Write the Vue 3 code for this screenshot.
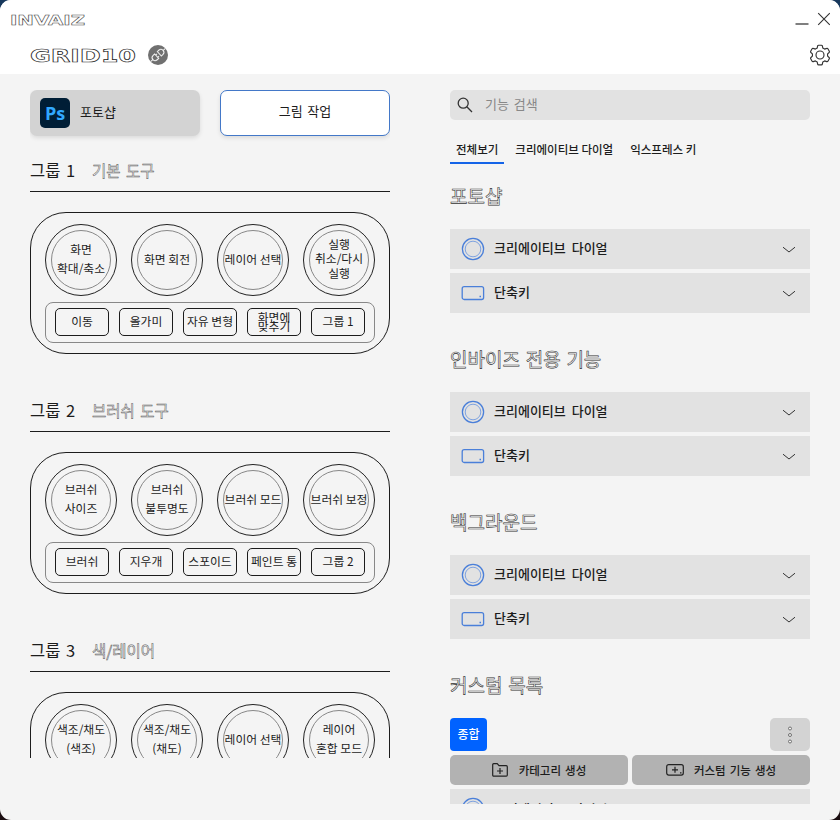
<script setup>
const groups = [
  {
    name: '그룹 1',
    title: '기본 도구',
    dials: [['화면', '확대/축소'], ['화면 회전'], ['레이어 선택'], ['실행', '취소/다시', '실행']],
    keys: [['이동'], ['올가미'], ['자유 변형'], ['화면에', '맞추기'], ['그룹 1']],
  },
  {
    name: '그룹 2',
    title: '브러쉬 도구',
    dials: [['브러쉬', '사이즈'], ['브러쉬', '불투명도'], ['브러쉬 모드'], ['브러쉬 보정']],
    keys: [['브러쉬'], ['지우개'], ['스포이드'], ['페인트 통'], ['그룹 2']],
  },
  {
    name: '그룹 3',
    title: '색/레이어',
    dials: [['색조/채도', '(색조)'], ['색조/채도', '(채도)'], ['레이어 선택'], ['레이어', '혼합 모드']],
    keys: [],
  },
]

const sections = ['포토샵', '인바이즈 전용 기능', '백그라운드']
const rows = [
  { kind: 'dial', label: '크리에이티브 다이얼' },
  { kind: 'key', label: '단축키' },
]
const tabs = ['전체보기', '크리에이티브 다이얼', '익스프레스 키']
</script>

<template>
  <div class="window">
    <header class="header">
      <div class="titlebar">
        <svg class="brand" width="80" height="16" viewBox="0 0 80 16">
          <text x="0" y="13" textLength="75" lengthAdjust="spacingAndGlyphs">INVAIZ</text>
        </svg>
        <div class="controls">
          <svg width="14" height="14" viewBox="0 0 14 14"><path d="M.5 12H13.5" stroke="#555" stroke-width="1.5" /></svg>
          <svg width="14" height="14" viewBox="0 0 14 14"><path d="M1.2 1.2 12.8 12.8M12.8 1.2 1.2 12.8" stroke="#333" stroke-width="1.1" /></svg>
        </div>
      </div>
      <div class="device">
        <svg class="product" width="108" height="20" viewBox="0 0 108 20">
          <text x="0" y="17" textLength="106" lengthAdjust="spacingAndGlyphs">GRID10</text>
        </svg>
        <svg class="link" width="20" height="20" viewBox="0 0 20 20" fill="none">
          <circle cx="10" cy="10" r="10" fill="#707070" />
          <g transform="rotate(-42 10 10)" stroke="#eee" stroke-width="1.1">
            <path d="M0 10H2.6M8.2 7H6.2A3 3 0 0 0 6.2 13H8.2ZM8.2 8.5H10M8.2 11.5H10M11.8 7H13.8A3 3 0 0 1 13.8 13H11.8ZM17.4 10H20" />
          </g>
        </svg>
        <svg class="gear" width="22" height="22" viewBox="0 0 22 22" fill="none" stroke="#333" stroke-width="1.15" stroke-linejoin="round">
          <path d="M9.6 1.2H12.4Q13.2 1.2 13.4 2L13.8 4.1L15.6 5.1L17.7 4.4Q18.5 4.1 18.9 4.8L20.3 7.2Q20.7 7.9 20.1 8.5L18.6 9.9V12.1L20.1 13.5Q20.7 14.1 20.3 14.8L18.9 17.2Q18.5 17.9 17.7 17.6L15.6 16.9L13.8 17.9L13.4 20Q13.2 20.8 12.4 20.8H9.6Q8.8 20.8 8.6 20L8.2 17.9L6.4 16.9L4.3 17.6Q3.5 17.9 3.1 17.2L1.7 14.8Q1.3 14.1 1.9 13.5L3.4 12.1V9.9L1.9 8.5Q1.3 7.9 1.7 7.2L3.1 4.8Q3.5 4.1 4.3 4.4L6.4 5.1L8.2 4.1L8.6 2Q8.8 1.2 9.6 1.2Z" />
          <circle cx="11" cy="11" r="4" />
        </svg>
      </div>
    </header>

    <main class="body">
      <section class="left">
        <div class="modes">
          <button class="mode app">
            <span class="ps">Ps</span>
            <span>포토샵</span>
          </button>
          <button class="mode task">그림 작업</button>
        </div>
        <article v-for="g in groups" :key="g.name" class="group">
          <h3 class="group-head"><span class="num">{{ g.name }}</span><span class="name">{{ g.title }}</span></h3>
          <div class="pad">
            <div class="dials">
              <div v-for="(d, i) in g.dials" :key="i" class="dial">
                <div class="inner" :class="{ triple: d.length === 3 }">
                  <span v-for="(line, j) in d" :key="j">{{ line }}</span>
                </div>
              </div>
            </div>
            <div class="keys">
              <div v-for="(k, i) in g.keys" :key="i" class="key">
                <span v-for="line in k" :key="line">{{ line }}</span>
              </div>
            </div>
          </div>
        </article>
      </section>

      <section class="right">
        <div class="search">
          <svg width="16" height="16" viewBox="0 0 16 16" fill="none" stroke="#333" stroke-width="1.3"><circle cx="6.2" cy="6.2" r="5" /><path d="M9.8 9.8 15 15" /></svg>
          <span>기능 검색</span>
        </div>
        <nav class="tabs">
          <span v-for="(t, i) in tabs" :key="t" class="tab" :class="{ active: i === 0 }">{{ t }}</span>
        </nav>
        <div v-for="s in sections" :key="s" class="section">
          <h2>{{ s }}</h2>
          <div v-for="r in rows" :key="r.kind" class="row">
            <svg v-if="r.kind === 'dial'" width="24" height="24" viewBox="0 0 24 24" fill="none" stroke="#4a7fd9"><circle cx="12" cy="12" r="10.6" stroke-width="1.3" /><circle cx="12" cy="12" r="7.8" stroke="#7fa3e0" /></svg>
            <svg v-else width="24" height="24" viewBox="0 0 24 24" fill="none" stroke="#4a7fd9" stroke-width="1.3"><rect x="1.2" y="5.7" width="21.4" height="12.8" rx="2" /><path d="M18.5 15.5H20" /></svg>
            <span class="label">{{ r.label }}</span>
            <svg class="chevron" width="14" height="8" viewBox="0 0 14 8" fill="none" stroke="#333"><path d="M1 1.2 7 6 13 1.2" /></svg>
          </div>
        </div>
        <div class="section custom">
          <h2>커스텀 목록</h2>
          <div class="toolbar">
            <span class="badge">종합</span>
            <button class="more">
              <svg width="6" height="18" viewBox="0 0 6 18" fill="#f4f4f4" stroke="#555" stroke-width=".8"><circle cx="3" cy="2.5" r="1.5" /><circle cx="3" cy="9" r="1.5" /><circle cx="3" cy="15.5" r="1.5" /></svg>
            </button>
          </div>
          <div class="actions">
            <button>
              <svg width="16" height="14" viewBox="0 0 16 14" fill="none" stroke="#222" stroke-width="1.2"><path d="M.7 12V1.7Q.7.7 1.7.7H5.2L7 2.7H14.3Q15.3 2.7 15.3 3.7V12Q15.3 13.2 14.3 13.2H1.7Q.7 13.2.7 12ZM8 5V11M5 8H11" /></svg>
              <span>카테고리 생성</span>
            </button>
            <button class="fn">
              <svg width="18" height="12" viewBox="0 0 18 12" fill="none" stroke="#222" stroke-width="1.2"><rect x=".7" y=".7" width="16.6" height="10.4" rx="2" /><path d="M9 2.8V8.8M6 5.8H12M14 8.8H15.5" /></svg>
              <span>커스텀 기능 생성</span>
            </button>
          </div>
          <div class="row last">
            <svg width="24" height="24" viewBox="0 0 24 24" fill="none" stroke="#4a7fd9"><circle cx="12" cy="12" r="10.6" stroke-width="1.3" /><circle cx="12" cy="12" r="7.8" stroke="#7fa3e0" /></svg>
            <span class="label">크리에이티브 다이얼</span>
          </div>
        </div>
      </section>
    </main>
  </div>
</template>

<style>
body {
  background: linear-gradient(#17385c 50%, #1a0d10 50%);
}
</style>

<style scoped>
* { box-sizing: border-box; }
.window {
  width: 840px;
  height: 820px;
  border-radius: 11px;
  overflow: hidden;
  background: #f4f4f4;
  color: #1c1c1c;
  font-family: "Noto Sans CJK KR", sans-serif;
  display: flex;
  flex-direction: column;
}
svg { display: block; flex: none; }
button { border: 0; font-family: inherit; color: inherit; padding: 0; margin: 0; }
.header { height: 74px; flex: none; background: #fff; }
.titlebar { display: flex; justify-content: space-between; align-items: center; height: 38px; padding: 2px 9px 0 10px; }
.controls { display: flex; gap: 8px; padding-bottom: 3px; }
.brand text { font: 700 14px "DejaVu Sans", sans-serif; fill: #fff; stroke: #444; stroke-width: .5; }
.device { display: flex; align-items: center; padding: 6px 9px 0 30px; }
.product text { font: 700 18.5px "DejaVu Sans", sans-serif; fill: #fff; stroke: #222; stroke-width: .65; }
.link { margin-left: 10px; }
.gear { margin-left: auto; }
.body { flex: 1; min-height: 0; display: flex; gap: 60px; padding: 16px 30px; }
.left { width: 360px; height: 668px; overflow: hidden; }
.modes { display: flex; gap: 20px; height: 50px; }
.mode { width: 170px; height: 46px; border-radius: 7px; display: flex; align-items: center; font-size: 13px; line-height: 20px; word-spacing: 1.5px; box-shadow: 0 2px 4px rgba(0, 0, 0, .1); }
.mode.app { background: #d3d3d3; padding-left: 10px; gap: 10px; }
.mode.app span:last-child { padding-bottom: 3px; }
.mode.task { background: #fff; border: 1px solid #4378c8; justify-content: center; padding-bottom: 4px; }
.ps { width: 30px; height: 30px; border-radius: 5px; background: #001e36; color: #31a8ff; font: 700 18px/30px "Open Sans", sans-serif; text-align: center; }
.group { height: 240px; }
.group-head { margin: 0; height: 52px; padding-top: 17px; border-bottom: 1px solid #1c1c1c; display: flex; font-size: 16.5px; line-height: 26px; font-weight: 400; word-spacing: 2px; }
.num { width: 62px; }
.name { color: #fafafa; font-size: 15.5px; font-weight: 400; -webkit-text-stroke: .5px #555; }
.pad { margin-top: 20px; height: 142px; border: 1px solid #1c1c1c; border-radius: 36px; padding: 11px 14px; }
.dials { display: flex; justify-content: space-between; }
.dial { width: 72px; height: 72px; border: 1.4px solid #222; border-radius: 50%; display: flex; align-items: center; justify-content: center; }
.inner { width: 60px; height: 60px; border: 1px solid #888; border-radius: 50%; display: flex; flex-direction: column; align-items: center; justify-content: center; font-size: 11.8px; line-height: 19px; white-space: nowrap; padding-bottom: 4px; }
.inner.triple { line-height: 14.5px; padding-bottom: 3px; }
.keys { margin-top: 6px; height: 41px; border: 1px solid #888; border-radius: 8px; display: flex; justify-content: space-between; align-items: center; padding: 0 9px 2px; }
.key { width: 54px; height: 28px; border: 1px solid #1c1c1c; border-radius: 5px; display: flex; flex-direction: column; align-items: center; justify-content: center; font-size: 11.8px; line-height: 9px; white-space: nowrap; padding-bottom: 2px; }
.right { width: 360px; height: 714px; overflow: hidden; }
.search { height: 30px; border-radius: 5px; background: #e2e2e2; display: flex; align-items: center; gap: 12px; padding-left: 7px; font-size: 13px; word-spacing: 2px; color: #888; }
.search span { line-height: 20px; padding-bottom: 2px; }
.tabs { display: flex; gap: 5px; height: 44px; padding-top: 18px; font-size: 11.5px; line-height: 23px; font-weight: 500; }
.tab { padding: 0 6px; height: 26px; white-space: nowrap; }
.tab.active { border-bottom: 2px solid #1464e8; }
.section { height: 163px; }
.section h2 { margin: 0; height: 65px; padding-top: 18px; font-size: 19px; line-height: 28px; font-weight: 400; word-spacing: 1.5px; color: #fafafa; -webkit-text-stroke: .6px #333; }
.row { height: 40px; margin-bottom: 4px; background: #e2e2e2; display: flex; align-items: center; padding: 0 14px 0 11px; }
.chevron { position: relative; top: 1px; }
.label { flex: 1; margin-left: 9px; font-size: 13px; line-height: 20px; font-weight: 500; word-spacing: 3px; padding-bottom: 3px; }
.last .label { padding-bottom: 0; }
.toolbar { display: flex; justify-content: space-between; height: 33px; margin-bottom: 4px; }
.badge { width: 37px; border-radius: 4px; background: #0062ff; color: #fff; font-size: 12px; font-weight: 500; line-height: 31px; text-align: center; }
.more { width: 40px; border-radius: 5px; background: #d3d3d3; display: flex; align-items: center; justify-content: center; }
.actions { display: flex; gap: 4px; height: 30px; margin-bottom: 4px; }
.actions button { flex: 1; border-radius: 5px; background: #b2b2b2; display: flex; align-items: center; justify-content: center; gap: 11px; font-size: 11.5px; line-height: 20px; font-weight: 500; word-spacing: 1.5px; }
.actions .fn { gap: 10px; }
.actions span { padding-bottom: 1px; }
</style>
